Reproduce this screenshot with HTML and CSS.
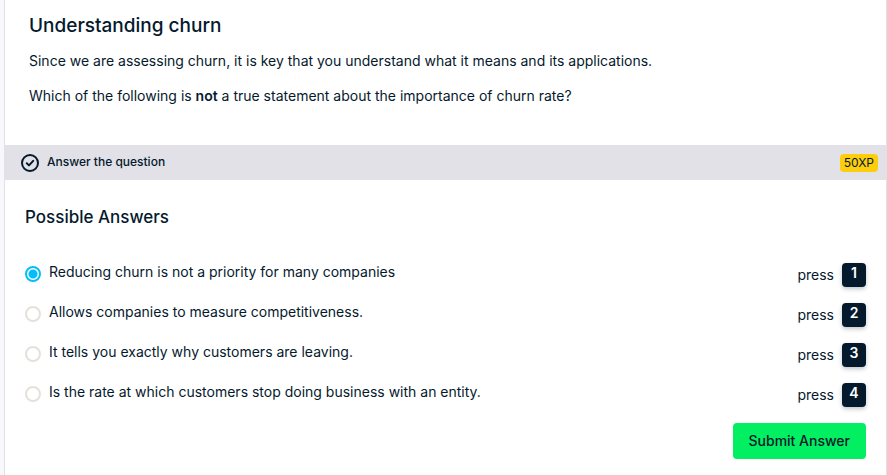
FILE: index.html
```html
<!DOCTYPE html>
<html lang="en">
<head>
<meta charset="utf-8">
<title>Understanding churn</title>
<link rel="stylesheet" href="styles.css">
</head>
<body>
<main class="panel">
  <section class="intro">
    <h1>Understanding churn</h1>
    <p>Since we are assessing churn, it is key that you understand what it means and its applications.</p>
    <p>Which of the following is <strong>not</strong> a true statement about the importance of churn rate?</p>
  </section>
  <header class="bar">
    <svg class="check" viewBox="0 0 18 18" aria-hidden="true"><circle cx="9" cy="9" r="8"/><path d="M5.800 9.300 8 11.400l4.200-4.600"/></svg>
    <h2 class="bar-title">Answer the question</h2>
    <span class="xp">50XP</span>
  </header>
  <form class="answers">
    <h3>Possible Answers</h3>
    <ul class="options">
      <li class="option"><label class="choice"><input type="radio" name="answer" checked><span>Reducing churn is not a priority for many companies</span></label><span class="hint">press <kbd>1</kbd></span></li>
      <li class="option"><label class="choice"><input type="radio" name="answer"><span>Allows companies to measure competitiveness.</span></label><span class="hint">press <kbd>2</kbd></span></li>
      <li class="option"><label class="choice"><input type="radio" name="answer"><span>It tells you exactly why customers are leaving.</span></label><span class="hint">press <kbd>3</kbd></span></li>
      <li class="option"><label class="choice"><input type="radio" name="answer"><span>Is the rate at which customers stop doing business with an entity.</span></label><span class="hint">press <kbd>4</kbd></span></li>
    </ul>
    <button class="submit" type="submit">Submit Answer</button>
  </form>
</main>
</body>
</html>
```
FILE: styles.css
```css
* {
  box-sizing: border-box;
}

body {
  margin: 0;
  padding-left: 4px;
  background: #f7f7fc;
  color: #05192d;
  font: 14px/20px Inter, "Liberation Sans", sans-serif;
}

.panel {
  min-height: 100vh;
  background: #fff;
  border: solid #e1e1e8;
  border-width: 0 1px;
}

.intro {
  padding: 12px 24px 39px;
}

h1, h2, h3, p, ul {
  margin: 0;
  padding: 0;
}

h1 {
  margin-bottom: 11px;
  font-size: 19px;
  line-height: 28px;
  font-weight: 500;
}

p + p {
  margin-top: 15px;
}

strong {
  font-weight: 600;
}

.bar {
  display: flex;
  align-items: center;
  height: 35px;
  padding: 0 8px 0 16px;
  background: #e1e1e7;
}

.check {
  width: 18px;
  height: 18px;
  margin-right: 8px;
  fill: none;
  stroke: #05192d;
  stroke-width: 2;
  stroke-linecap: round;
  stroke-linejoin: round;
}

.bar-title {
  flex: 1;
  padding-bottom: 2px;
  font-size: 12px;
  line-height: 18px;
  font-weight: 500;
}

.xp {
  padding: 0 4px;
  border-radius: 4px;
  background: #fcce0d;
  font-size: 12px;
  line-height: 18px;
  font-weight: 400;
}

.answers {
  display: flex;
  flex-direction: column;
  padding: 25px 20px 16px;
}

h3 {
  margin-bottom: 26px;
  font-size: 17px;
  line-height: 24px;
  font-weight: 500;
}

.options {
  list-style: none;
}

.option {
  display: flex;
  justify-content: space-between;
  height: 40px;
  padding-top: 7px;
}

.choice {
  display: flex;
  gap: 8px;
}

input {
  appearance: none;
  flex: none;
  width: 16px;
  height: 16px;
  margin: 4px 0 0;
  border: 2px solid #e5e1da;
  border-radius: 50%;
  background: #fff;
}

input:checked {
  border-color: #06bdfc;
  background: radial-gradient(circle, #06bdfc 4px, #fff 5px);
}

.hint {
  display: flex;
  gap: 8px;
  line-height: 26px;
}

kbd {
  width: 24px;
  height: 24px;
  margin-top: 1px;
  border-radius: 4px;
  background: #05192d;
  box-shadow: 0 2px 4px #05192d40;
  color: #fff;
  font: 600 14px/20px Inter, "Liberation Sans", sans-serif;
  text-align: center;
}

.submit {
  align-self: flex-end;
  height: 36px;
  margin-top: 8px;
  padding: 0 16px;
  border: 0;
  border-radius: 4px;
  background: #03ef62;
  color: #05192d;
  font: 500 14px/20px Inter, "Liberation Sans", sans-serif;
}
```
